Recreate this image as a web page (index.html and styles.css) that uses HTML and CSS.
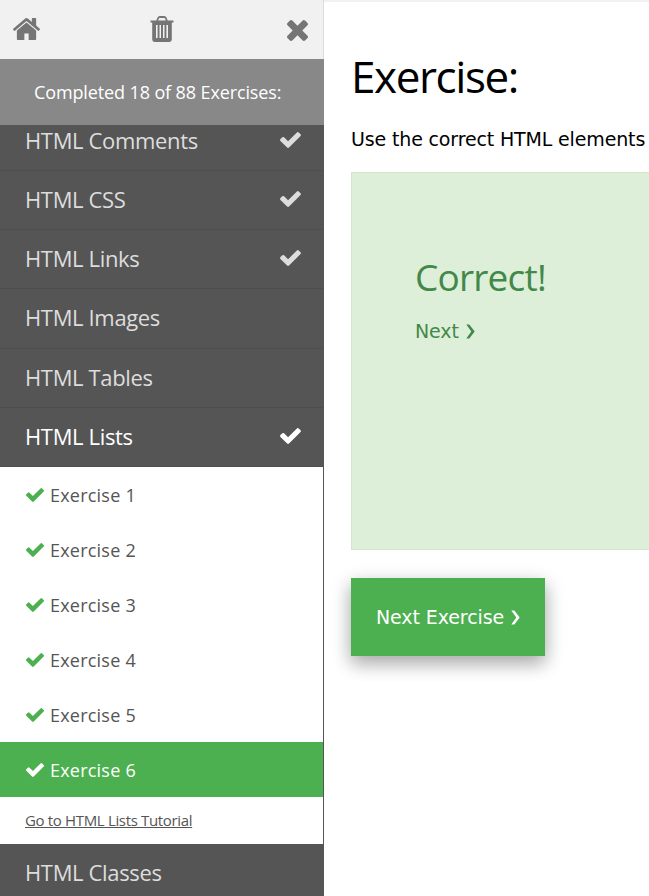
FILE: index.html
```html
<!DOCTYPE html>
<html lang="en">
<head>
<meta charset="utf-8">
<title>HTML Exercises</title>
<link rel="stylesheet" href="styles.css">
</head>
<body>
<svg class="defs" width="0" height="0">
  <symbol id="check" viewBox="121 334 1550 1188"><path d="M1671 566q0 40-28 68l-724 724-136 136q-28 28-68 28t-68-28l-136-136-362-362q-28-28-28-68t28-68l136-136q28-28 68-28t68 28l294 295 656-657q28-28 68-28t68 28l136 136q28 28 28 68z"/></symbol>
</svg>
<aside class="sidebar">
  <div class="toolbar">
    <svg class="home" viewBox="89 253 1614 1283" preserveAspectRatio="none"><path d="M1472 992v480q0 26-19 45t-45 19h-384v-384h-256v384h-384q-26 0-45-19t-19-45v-480q0-1 .5-3t.5-3l575-474 575 474q1 2 1 6zm223-69l-62 74q-8 9-21 11h-3q-13 0-21-7l-692-577-692 577q-12 8-24 7-13-2-21-11l-62-74q-8-10-7-23.5t11-21.5l719-599q32-26 76-26t76 26l244 204v-195q0-14 9-23t23-9h192q14 0 23 9t9 23v408l219 182q10 8 11 21.5t-7 23.5z"/></svg>
    <svg class="trash" viewBox="0 0 24 26"><path fill-rule="evenodd" d="M.5 4.5H6.300L7.500 1.500Q8.100 0 9.700 0H14.300Q15.900 0 16.500 1.500L17.700 4.500H23.500V6.500H21.800V23Q21.800 26 19 26H5Q2.200 26 2.200 23V6.500H.5ZM8.200 4.500H15.800L15 2.300Q14.800 1.900 14.300 1.900H9.700Q9.200 1.900 9 2.300ZM6 9V22H7.600V9ZM9.500 9V22H11V9ZM13 9V22H14.500V9ZM16.400 9V22H18V9Z"/></svg>
    <svg class="close" viewBox="302 366 1188 1188"><path d="M1490 1322q0 40-28 68l-136 136q-28 28-68 28t-68-28l-294-294-294 294q-28 28-68 28t-68-28l-136-136q-28-28-28-68t28-68l294-294-294-294q-28-28-28-68t28-68l136-136q28-28 68-28t68 28l294 294 294-294q28-28 68-28t68 28l136 136q28 28 28 68t-28 68l-294 294 294 294q28 28 28 68z"/></svg>
  </div>
  <div class="progress">Completed 18 of 88 Exercises:</div>
  <nav class="menu">
    <a class="topic clipped"><span>HTML Comments</span><svg class="tick"><use href="#check"/></svg></a>
    <a class="topic"><span>HTML CSS</span><svg class="tick"><use href="#check"/></svg></a>
    <a class="topic"><span>HTML Links</span><svg class="tick"><use href="#check"/></svg></a>
    <a class="topic"><span>HTML Images</span></a>
    <a class="topic"><span>HTML Tables</span></a>
    <a class="topic current"><span>HTML Lists</span><svg class="tick"><use href="#check"/></svg></a>
    <div class="exercises">
      <a class="exercise"><svg><use href="#check"/></svg><span>Exercise 1</span></a>
      <a class="exercise"><svg><use href="#check"/></svg><span>Exercise 2</span></a>
      <a class="exercise"><svg><use href="#check"/></svg><span>Exercise 3</span></a>
      <a class="exercise"><svg><use href="#check"/></svg><span>Exercise 4</span></a>
      <a class="exercise"><svg><use href="#check"/></svg><span>Exercise 5</span></a>
      <a class="exercise active"><svg><use href="#check"/></svg><span>Exercise 6</span></a>
      <div class="tutorial"><a>Go to HTML Lists Tutorial</a></div>
    </div>
    <a class="topic"><span>HTML Classes</span></a>
  </nav>
</aside>
<main class="content">
  <h1>Exercise:</h1>
  <p class="task">Use the correct HTML elements</p>
  <section class="result">
    <h2>Correct!</h2>
    <a class="next"><span>Next</span><svg class="arrow" viewBox="0 0 9 15"><path d="M0.300 .4H3.300L8.700 7.500 3.300 14.600H.3L5.300 7.500Z"/></svg></a>
  </section>
  <a class="button"><span>Next Exercise</span><svg class="arrow" viewBox="0 0 9 15"><path d="M0.300 .4H3.300L8.700 7.500 3.300 14.600H.3L5.300 7.500Z"/></svg></a>
</main>
</body>
</html>
```
FILE: styles.css
```css
* { box-sizing: border-box; }
body {
  margin: 0;
  width: 649px;
  height: 896px;
  display: flex;
  overflow: hidden;
  background: #fff;
  color: #000;
  font-family: "Open Sans", "Noto Sans", sans-serif;
}
svg { display: block; fill: currentColor; flex: none; }
.defs { display: none; }
.sidebar {
  width: 324px;
  height: 896px;
  flex: none;
  display: flex;
  flex-direction: column;
  overflow: hidden;
}
.toolbar {
  height: 59px;
  flex: none;
  display: flex;
  align-items: center;
  padding: 0 15px 0 13px;
  background: #f1f1f1;
  border-right: 1px solid #ddd;
  color: #757575;
}
.home { width: 27px; height: 22px; margin-top: -1px; }
.trash { width: 24px; height: 26px; margin: -1px 0 0 110px; }
.close { width: 21px; height: 21px; margin: 2px 0 0 auto; }
.progress {
  height: 66px;
  flex: none;
  padding-left: 34px;
  line-height: 66px;
  background: #888;
  color: #fff;
  font-size: 18px;
  letter-spacing: -0.12px;
  white-space: nowrap;
}
.menu { flex: 1; overflow: hidden; border-right: 1px solid #555; }
.topic {
  height: 59.200px;
  display: flex;
  align-items: center;
  justify-content: space-between;
  padding: 0 22px 2px 25px;
  background: #555;
  border-bottom: 1px solid #4e4e4e;
  color: #ddd;
  font-size: 22px;
  letter-spacing: -0.35px;
}
.clipped { margin-top: -13.200px; }
.current { color: #fff; }
.tick { width: 21px; height: 16px; }
.exercises { background: #fff; color: #555; }
.exercise {
  height: 55px;
  display: flex;
  align-items: center;
  gap: 6px;
  padding: 2px 0 0 26px;
  font-size: 18px;
  letter-spacing: 0.22px;
}
.exercise svg { width: 18px; height: 14px; color: #4caf50; }
.exercise.active { background: #4caf50; color: #fff; }
.exercise.active svg { color: #fff; }
.tutorial { height: 47px; padding-left: 25px; line-height: 47px; font-size: 15px; }
.tutorial a { text-decoration: underline; letter-spacing: -0.34px; }
.content {
  flex: 1;
  min-width: 0;
  padding-left: 27px;
  border-top: 2px solid #f1f1f1;
  font-family: "DejaVu Sans", sans-serif;
}
h1, h2 { margin: 0; font-family: "Open Sans", "Noto Sans", sans-serif; font-weight: 400; white-space: nowrap; }
h1 { padding-top: 44px; font-size: 44px; line-height: 60px; letter-spacing: -1.4px; }
.task { margin: 18px 0 0; font-size: 19px; line-height: 30px; letter-spacing: -0.15px; white-space: nowrap; }
.result {
  height: 378px;
  margin-top: 18px;
  padding: 77px 0 0 63px;
  background: #ddefd8;
  border: 1px solid #d3e7c7;
  border-right: 0;
  color: #43884a;
}
h2 { font-size: 37px; line-height: 54px; letter-spacing: -0.8px; }
.next, .button { display: flex; align-items: center; gap: 7px; font-size: 19px; letter-spacing: -0.1px; white-space: nowrap; }
.next { height: 30px; margin-top: 12px; }
.arrow { width: 9px; height: 15px; }
.button {
  width: 194px;
  height: 78px;
  margin-top: 28px;
  padding-left: 25px;
  background: #4caf50;
  color: #fff;
  box-shadow: 0 8px 16px rgba(0, 0, 0, .2), 0 6px 20px rgba(0, 0, 0, .19);
}
```
